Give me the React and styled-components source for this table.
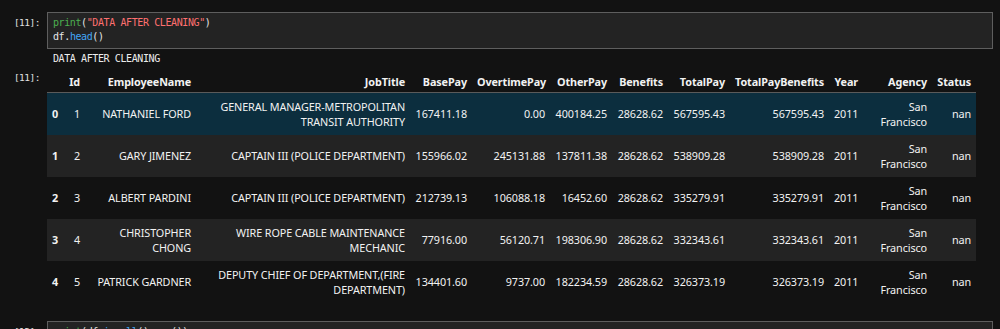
import React from "react";
import styled, { createGlobalStyle } from "styled-components";

const GlobalStyle = createGlobalStyle`
  html, body { margin: 0; padding: 0; background: #121212; overflow: hidden; }
  body { width: 1000px; height: 329px; }
`;

const MONO = `"DejaVu Sans Mono", "Liberation Mono", monospace`;
const SANS = `"Noto Sans", "Open Sans", sans-serif`;

const Notebook = styled.div`
  padding-top: 12px;
  display: flex;
  flex-direction: column;
`;

const Cell = styled.div`
  display: flex;
  flex-direction: column;
  margin-top: ${(p) => p.$gap || 0}px;
`;

const Area = styled.div`
  display: grid;
  grid-template-columns: 47px 1fr;
  margin-top: ${(p) => p.$top || 0}px;
`;

const Prompt = styled.div`
  font-family: ${MONO};
  font-size: 9.5px;
  letter-spacing: -0.5px;
  line-height: 14px;
  color: #e0e0e0;
  text-align: right;
  padding-right: 7px;
  padding-top: ${(p) => p.$pt || 0}px;
  white-space: pre;
`;

const Editor = styled.div`
  border: 1px solid #5e5e5e;
  background: #232323;
  margin-right: 7px;
  padding: 3px 5px 4px;
`;

const CodeLine = styled.div`
  font-family: ${MONO};
  font-size: 10px;
  letter-spacing: -0.4px;
  line-height: 14px;
  color: #e6e6e6;
  white-space: pre;
`;

const Tok = styled.span`
  color: ${(p) =>
    p.$k === "builtin" ? "#4caf50" : p.$k === "string" ? "#ff7070" : p.$k === "prop" ? "#42a5f5" : "#e6e6e6"};
`;

const Stream = styled.div`
  font-family: ${MONO};
  font-size: 10px;
  letter-spacing: -0.4px;
  line-height: 14px;
  color: #ececec;
  padding: 2px 5px 0 6px;
  white-space: pre;
`;

const Table = styled.table`
  border-collapse: collapse;
  table-layout: fixed;
  width: 929px;
  font-family: ${SANS};
  font-size: 10.8px;
  letter-spacing: -0.1px;
  color: #f2f2f2;
`;

const Head = styled.thead`
  tr { border-bottom: 1px solid #5a5a5a; }
`;

const Th = styled.th`
  font-weight: 700;
  text-align: right;
  padding: 3px 5px 3px;
  line-height: 15px;
  white-space: nowrap;
`;

const Row = styled.tr`
  height: 42px;
  background: ${(p) => (p.$hover ? "#0c2e3e" : p.$odd ? "#232323" : "transparent")};
`;

const IndexCell = styled.th`
  font-weight: 700;
  text-align: right;
  padding: 0 5px;
  line-height: 15px;
  vertical-align: middle;
`;

const Td = styled.td`
  text-align: right;
  padding: 0 5px;
  line-height: 15px;
  vertical-align: middle;
  white-space: nowrap;
`;

const cols = [
  { key: "", w: 15 },
  { key: "Id", w: 23 },
  { key: "EmployeeName", w: 111 },
  { key: "JobTitle", w: 214 },
  { key: "BasePay", w: 62 },
  { key: "OvertimePay", w: 78 },
  { key: "OtherPay", w: 62 },
  { key: "Benefits", w: 56 },
  { key: "TotalPay", w: 62 },
  { key: "TotalPayBenefits", w: 99 },
  { key: "Year", w: 34 },
  { key: "Agency", w: 69 },
  { key: "Status", w: 44 },
];

const SF = ["San", "Francisco"];

const rows = [
  ["1", ["NATHANIEL FORD"], ["GENERAL MANAGER-METROPOLITAN", "TRANSIT AUTHORITY"], "167411.18", "0.00", "400184.25", "28628.62", "567595.43", "567595.43", "2011", SF, "nan"],
  ["2", ["GARY JIMENEZ"], ["CAPTAIN III (POLICE DEPARTMENT)"], "155966.02", "245131.88", "137811.38", "28628.62", "538909.28", "538909.28", "2011", SF, "nan"],
  ["3", ["ALBERT PARDINI"], ["CAPTAIN III (POLICE DEPARTMENT)"], "212739.13", "106088.18", "16452.60", "28628.62", "335279.91", "335279.91", "2011", SF, "nan"],
  ["4", ["CHRISTOPHER", "CHONG"], ["WIRE ROPE CABLE MAINTENANCE", "MECHANIC"], "77916.00", "56120.71", "198306.90", "28628.62", "332343.61", "332343.61", "2011", SF, "nan"],
  ["5", ["PATRICK GARDNER"], ["DEPUTY CHIEF OF DEPARTMENT,(FIRE", "DEPARTMENT)"], "134401.60", "9737.00", "182234.59", "28628.62", "326373.19", "326373.19", "2011", SF, "nan"],
];

function Lines({ v }) {
  if (!Array.isArray(v)) return v;
  return v.map((l, i) => (
    <React.Fragment key={i}>
      {i > 0 && <br />}
      {l}
    </React.Fragment>
  ));
}

export default function App() {
  return (
    <>
      <GlobalStyle />
      <Notebook>
        <Cell>
          <Area>
            <Prompt $pt={4}>[11]:</Prompt>
            <Editor>
              <CodeLine>
                <Tok $k="builtin">print</Tok>(<Tok $k="string">"DATA AFTER CLEANING"</Tok>)
              </CodeLine>
              <CodeLine>
                df.<Tok $k="prop">head</Tok>()
              </CodeLine>
            </Editor>
          </Area>
          <Area $top={1}>
            <div />
            <Stream>DATA AFTER CLEANING</Stream>
          </Area>
          <Area $top={5}>
            <Prompt>[11]:</Prompt>
            <Table>
              <colgroup>
                {cols.map((c, i) => (
                  <col key={i} style={{ width: c.w }} />
                ))}
              </colgroup>
              <Head>
                <tr>
                  {cols.map((c, i) => (
                    <Th key={i}>{c.key}</Th>
                  ))}
                </tr>
              </Head>
              <tbody>
                {rows.map((r, i) => (
                  <Row key={i} $hover={i === 0} $odd={i % 2 === 1}>
                    <IndexCell>{i}</IndexCell>
                    {r.map((v, j) => (
                      <Td key={j}>
                        <Lines v={v} />
                      </Td>
                    ))}
                  </Row>
                ))}
              </tbody>
            </Table>
          </Area>
        </Cell>
        <Cell $gap={18}>
          <Area>
            <Prompt $pt={4}>[12]:</Prompt>
            <Editor>
              <CodeLine>
                <Tok $k="builtin">print</Tok>(df.<Tok $k="prop">isnull</Tok>().<Tok $k="prop">sum</Tok>())
              </CodeLine>
            </Editor>
          </Area>
        </Cell>
      </Notebook>
    </>
  );
}
